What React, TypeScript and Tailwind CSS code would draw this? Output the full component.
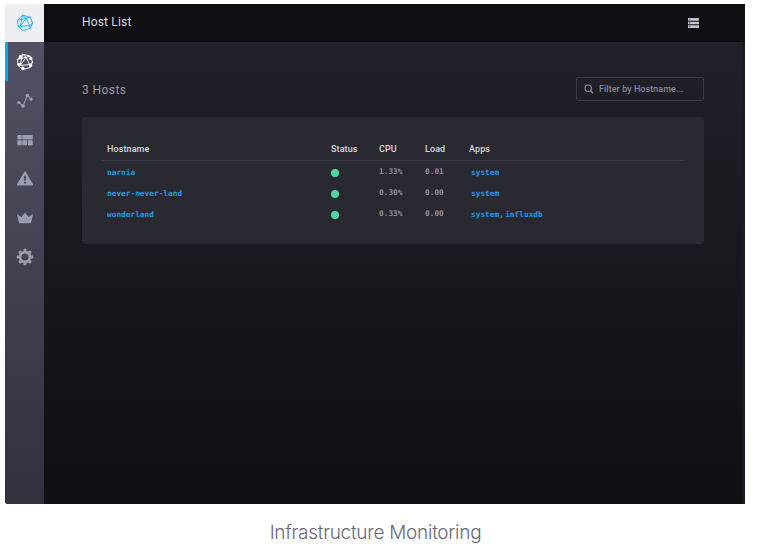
import React from "react";

type Host = { name: string; cpu: string; load: string; apps: string[] };

const hosts: Host[] = [
  { name: "narnia", cpu: "1.33%", load: "0.01", apps: ["system"] },
  { name: "never-never-land", cpu: "0.30%", load: "0.00", apps: ["system"] },
  { name: "wonderland", cpu: "0.33%", load: "0.00", apps: ["system", "influxdb"] },
];

function Polyhedron({ nodes = false }: { nodes?: boolean }) {
  return (
    <svg width="18" height="18" viewBox="0 0 18 18" fill="none" stroke="currentColor" strokeWidth="0.95" strokeLinejoin="round">
      <path d="M6.5 1.2 14.3 3.2 16.6 9 14.3 14.4 7 16.6 2.3 12.8 1.4 6.4Z" />
      <path d="M1.4 6.4 10.2 4.3 14.3 3.2M6.5 1.2 10.2 4.3 13.6 11.6 4.2 12.4ZM13.6 11.6 16.6 9M4.2 12.4 10.2 4.3M4.2 12.4H2.3M13.6 11.6 14.3 14.4" />
      {nodes && (
        <g fill="currentColor" stroke="none">
          <circle cx="4.6" cy="4" r="1.9" />
          <circle cx="14.8" cy="5.6" r="1.7" />
          <circle cx="2.8" cy="11.4" r="1.4" />
          <circle cx="6.8" cy="15.4" r="1.8" />
          <circle cx="14.7" cy="12.6" r="1.5" />
        </g>
      )}
    </svg>
  );
}

function GraphIcon() {
  return (
    <svg width="18" height="18" viewBox="0 0 18 18" fill="none" stroke="currentColor" strokeWidth="1.1">
      <path d="M3 10.6 7 14 11.3 3.4 15 7.2" />
      <g fill="currentColor" stroke="none">
        <circle cx="2.8" cy="10.6" r="1.6" />
        <circle cx="7" cy="14" r="1.8" />
        <circle cx="11.3" cy="3.6" r="1.8" />
        <circle cx="15" cy="7.2" r="1.6" />
      </g>
    </svg>
  );
}

function DashboardIcon() {
  return (
    <svg width="18" height="18" viewBox="0 0 18 18" fill="currentColor">
      <rect x="1.3" y="4" width="4.4" height="4.6" rx=".8" />
      <rect x="6.3" y="4" width="10.5" height="4.6" rx=".8" />
      <rect x="1.3" y="9.3" width="4.4" height="5" rx=".8" />
      <rect x="6.3" y="9.3" width="4.8" height="5" rx=".8" />
      <rect x="11.8" y="9.3" width="5" height="5" rx=".8" />
    </svg>
  );
}

function AlertIcon() {
  return (
    <svg width="18" height="18" viewBox="0 0 18 18" fill="currentColor">
      <path fillRule="evenodd" d="M8.2 1.9Q9 .6 9.8 1.9L17 14.2Q17.6 15.6 16.2 15.6H1.8Q.4 15.6 1 14.2ZM8 5.8 8.3 10.8H9.7L10 5.8ZM8.1 11.7V13.5H9.9V11.7Z" />
    </svg>
  );
}

function CrownIcon() {
  return (
    <svg width="18" height="18" viewBox="0 0 18 18" fill="currentColor">
      <path d="M.9 5 5.4 8.1 9 3.4 12.6 8.1 17.1 5 15.2 13.4Q15.1 14.2 14.2 14.2H3.8Q2.9 14.2 2.8 13.4Z" />
    </svg>
  );
}

function GearIcon() {
  return (
    <svg width="18" height="18" viewBox="0 0 18 18">
      <g fill="currentColor">
        <rect x="7.5" y=".7" width="3" height="16.6" rx="1" />
        <rect x="7.5" y=".7" width="3" height="16.6" rx="1" transform="rotate(45 9 9)" />
        <rect x="7.5" y=".7" width="3" height="16.6" rx="1" transform="rotate(90 9 9)" />
        <rect x="7.5" y=".7" width="3" height="16.6" rx="1" transform="rotate(135 9 9)" />
        <circle cx="9" cy="9" r="6.3" />
      </g>
      <circle cx="9" cy="9" r="3.6" fill="#464655" />
    </svg>
  );
}

function ServerIcon() {
  return (
    <svg width="11" height="10" viewBox="0 0 11 10">
      <path d="M0 0h11v2.7H0zM0 3.65h11v2.7H0zM0 7.3h11V10H0z" fill="#bfc2cb" />
      <path d="M1 .9h1.3v.9H1zM1 4.6h1.3v.9H1zM1 8.2h1.3v.9H1z" fill="#50515c" />
    </svg>
  );
}

function SearchIcon() {
  return (
    <svg width="10" height="10" viewBox="0 0 10 10" fill="none" stroke="#8e91a1">
      <circle cx="4.2" cy="4.2" r="3.2" strokeWidth="1.1" />
      <path d="M6.5 6.7 8.8 9.1" strokeWidth="1.5" />
    </svg>
  );
}

const navigation = [
  { label: "Data explorer", icon: <GraphIcon /> },
  { label: "Dashboards", icon: <DashboardIcon /> },
  { label: "Alerts", icon: <AlertIcon /> },
  { label: "Admin", icon: <CrownIcon /> },
  { label: "Settings", icon: <GearIcon /> },
];

const columns = "grid grid-cols-[224px_48px_46px_45px_1fr]";

export default function App() {
  return (
    <div className="h-[555px] w-[758px] overflow-hidden bg-white pl-[5px] pt-[4px] font-['Roboto',sans-serif]">
      <div className="flex h-[500px] w-[740px] overflow-hidden rounded-bl-[3px] bg-[#0f0e13]">
        <nav className="flex w-[39px] shrink-0 flex-col bg-linear-to-b from-[#555467] to-[#31313d] text-[#9a9dad]">
          <a className="flex h-[38px] items-center justify-center bg-[#eeeff2] text-[#22adf6]"><Polyhedron /></a>
          <a className="flex h-[39px] items-center justify-center border-l-[3px] border-[#00a8ff] pr-[3px] text-white"><Polyhedron nodes /></a>
          {navigation.map((item) => (
            <a key={item.label} aria-label={item.label} className="flex h-[39px] items-center justify-center">{item.icon}</a>
          ))}
        </nav>
        <main className="flex min-w-0 flex-1 flex-col border-r-[3px] border-[#1b1a22] bg-linear-to-b from-[#22222a] to-[#0f0e13]">
          <header className="-mr-[3px] flex h-[38px] shrink-0 items-center justify-between bg-[#0f0e13] pl-[38px] pr-[46px]">
            <h1 className="pb-[2px] text-[12px] tracking-[0.17px] text-[#d8dae1]">Host List</h1>
            <ServerIcon />
          </header>
          <section className="pl-[38px] pr-[38px] pt-[35px]">
            <div className="flex h-[24px] items-center justify-between">
              <h2 className="pt-[2px] text-[12px] tracking-[0.42px] text-[#9799a7]">3 Hosts</h2>
              <div className="flex h-[24px] w-[128px] items-center gap-[5px] rounded-[2px] border border-[#383846] pl-[7px]">
                <SearchIcon />
                <span className="whitespace-nowrap pt-[2px] text-[9px] font-medium tracking-[0.05px] text-[#858796]">Filter by Hostname...</span>
              </div>
            </div>
            <div className="mt-4 h-[127px] rounded-[3px] bg-[#292931] px-5 pt-[20px]">
              <div className={`${columns} h-[24px] items-center border-b border-[#383846] pl-[5px] pt-[2px] text-[9px] font-medium tracking-[0.1px] text-[#d5d8e0]`}>
                <span>Hostname</span><span>Status</span><span>CPU</span><span>Load</span><span className="-ml-px">Apps</span>
              </div>
              {hosts.map((host) => (
                <div key={host.name} className={`${columns} h-[21px] items-center pl-[5px] font-['DejaVu_Sans_Mono',monospace] text-[7.8px] font-bold text-[#8c8e9a]`}>
                  <span className="pt-[2px] text-[#1c9de0]">{host.name}</span>
                  <span className="mt-[2px] size-[8px] rounded-full bg-[#4ed8a0]" />
                  <span className="pt-[1px]">{host.cpu}</span>
                  <span className="pt-[1px]">{host.load}</span>
                  <span className="flex pl-[1px] pt-[2px]">
                    {host.apps.map((app, index) => (
                      <React.Fragment key={app}>
                        {index > 0 && <span className="w-[6px]">,</span>}
                        <span className="text-[#1c9de0]">{app}</span>
                      </React.Fragment>
                    ))}
                  </span>
                </div>
              ))}
            </div>
          </section>
        </main>
      </div>
      <p className="flex h-[51px] w-[741px] items-center justify-center pt-[8px] font-['Inter',sans-serif] text-[19px] font-light tracking-[-0.28px] text-[#686877]">Infrastructure Monitoring</p>
    </div>
  );
}
